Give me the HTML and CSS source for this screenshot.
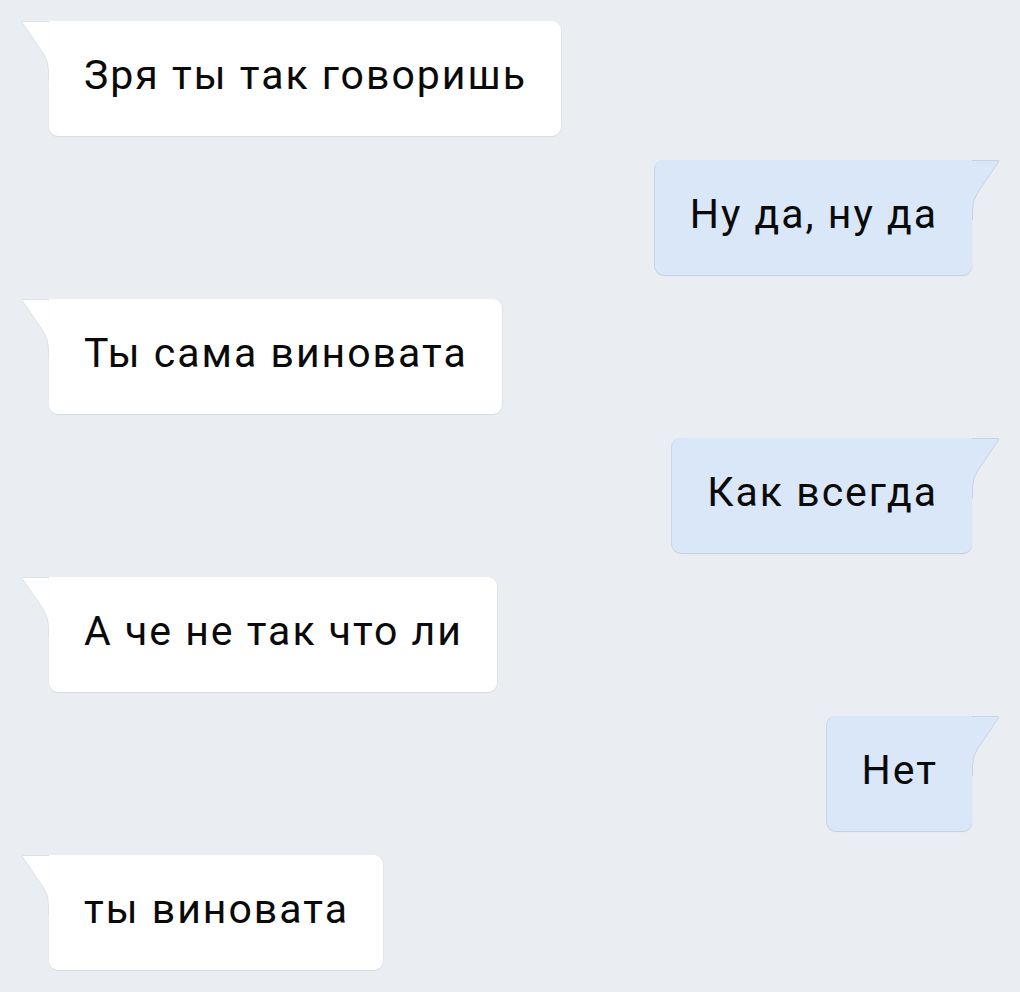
FILE: index.html
```html
<!DOCTYPE html>
<html lang="ru">
<head>
<meta charset="utf-8">
<link rel="stylesheet" href="styles.css">
</head>
<body>
<div class="chat">
  <div class="msg in">
    <svg class="tail" width="28" height="60" viewBox="0 0 28 60"><path d="M28 0.5 H2 Q0.5 0.5 1.5 2 L22 32 Q27.5 40 27.5 50 V60 H28 Z" fill="#fff"/><path d="M28 0.5 H2 Q0.5 0.5 1.5 2 L22 32 Q27.5 40 27.5 50 V60" fill="none" stroke="#dde2e8" stroke-width="1"/></svg>
    <div class="body">Зря ты так говоришь</div>
  </div>
  <div class="msg out">
    <div class="body">Ну да, ну да</div>
    <svg class="tail" width="28" height="60" viewBox="0 0 28 60"><path d="M0 0.5 H26 Q27.5 0.5 26.5 2 L6 32 Q0.5 40 0.5 50 V60 H0 Z" fill="#d9e7f8"/><path d="M0 0.5 H26 Q27.5 0.5 26.5 2 L6 32 Q0.5 40 0.5 50 V60" fill="none" stroke="#c8d3e0" stroke-width="1"/></svg>
  </div>
  <div class="msg in">
    <svg class="tail" width="28" height="60" viewBox="0 0 28 60"><path d="M28 0.5 H2 Q0.5 0.5 1.5 2 L22 32 Q27.5 40 27.5 50 V60 H28 Z" fill="#fff"/><path d="M28 0.5 H2 Q0.5 0.5 1.5 2 L22 32 Q27.5 40 27.5 50 V60" fill="none" stroke="#dde2e8" stroke-width="1"/></svg>
    <div class="body">Ты сама виновата</div>
  </div>
  <div class="msg out">
    <div class="body">Как всегда</div>
    <svg class="tail" width="28" height="60" viewBox="0 0 28 60"><path d="M0 0.5 H26 Q27.5 0.5 26.5 2 L6 32 Q0.5 40 0.5 50 V60 H0 Z" fill="#d9e7f8"/><path d="M0 0.5 H26 Q27.5 0.5 26.5 2 L6 32 Q0.5 40 0.5 50 V60" fill="none" stroke="#c8d3e0" stroke-width="1"/></svg>
  </div>
  <div class="msg in">
    <svg class="tail" width="28" height="60" viewBox="0 0 28 60"><path d="M28 0.5 H2 Q0.5 0.5 1.5 2 L22 32 Q27.5 40 27.5 50 V60 H28 Z" fill="#fff"/><path d="M28 0.5 H2 Q0.5 0.5 1.5 2 L22 32 Q27.5 40 27.5 50 V60" fill="none" stroke="#dde2e8" stroke-width="1"/></svg>
    <div class="body">А че не так что ли</div>
  </div>
  <div class="msg out">
    <div class="body">Нет</div>
    <svg class="tail" width="28" height="60" viewBox="0 0 28 60"><path d="M0 0.5 H26 Q27.5 0.5 26.5 2 L6 32 Q0.5 40 0.5 50 V60 H0 Z" fill="#d9e7f8"/><path d="M0 0.5 H26 Q27.5 0.5 26.5 2 L6 32 Q0.5 40 0.5 50 V60" fill="none" stroke="#c8d3e0" stroke-width="1"/></svg>
  </div>
  <div class="msg in">
    <svg class="tail" width="28" height="60" viewBox="0 0 28 60"><path d="M28 0.5 H2 Q0.5 0.5 1.5 2 L22 32 Q27.5 40 27.5 50 V60 H28 Z" fill="#fff"/><path d="M28 0.5 H2 Q0.5 0.5 1.5 2 L22 32 Q27.5 40 27.5 50 V60" fill="none" stroke="#dde2e8" stroke-width="1"/></svg>
    <div class="body">ты виновата</div>
  </div>
</div>
</body>
</html>
```
FILE: styles.css
```css
html, body {
  margin: 0;
  padding: 0;
  background: #eaeef3;
}
body {
  width: 1020px;
  height: 992px;
  overflow: hidden;
  font-family: Roboto, "Noto Sans", sans-serif;
}
.chat {
  display: flex;
  flex-direction: column;
  gap: 24px;
  padding: 21px 20px 0 21px;
}
.msg {
  display: flex;
  align-items: flex-start;
}
.msg.in { align-self: flex-start; }
.msg.out { align-self: flex-end; }
.tail {
  display: block;
  flex: none;
}
.body {
  height: 115px;
  box-sizing: border-box;
  padding: 0 34px 8px 35px;
  display: flex;
  align-items: center;
  font-size: 41px;
  letter-spacing: 2px;
  color: #0a0a0a;
  white-space: nowrap;
}
.in .body {
  background: #fff;
  border-radius: 0 9px 9px 9px;
  box-shadow: 0 1px 1px #d5dbe2, 1px 0 0 #e1e6eb;
}
.out .body {
  background: #d9e7f8;
  border-radius: 9px 0 9px 9px;
  box-shadow: 0 1px 1px #c3cedc, -1px 0 0 #cfd9e5;
}
```
